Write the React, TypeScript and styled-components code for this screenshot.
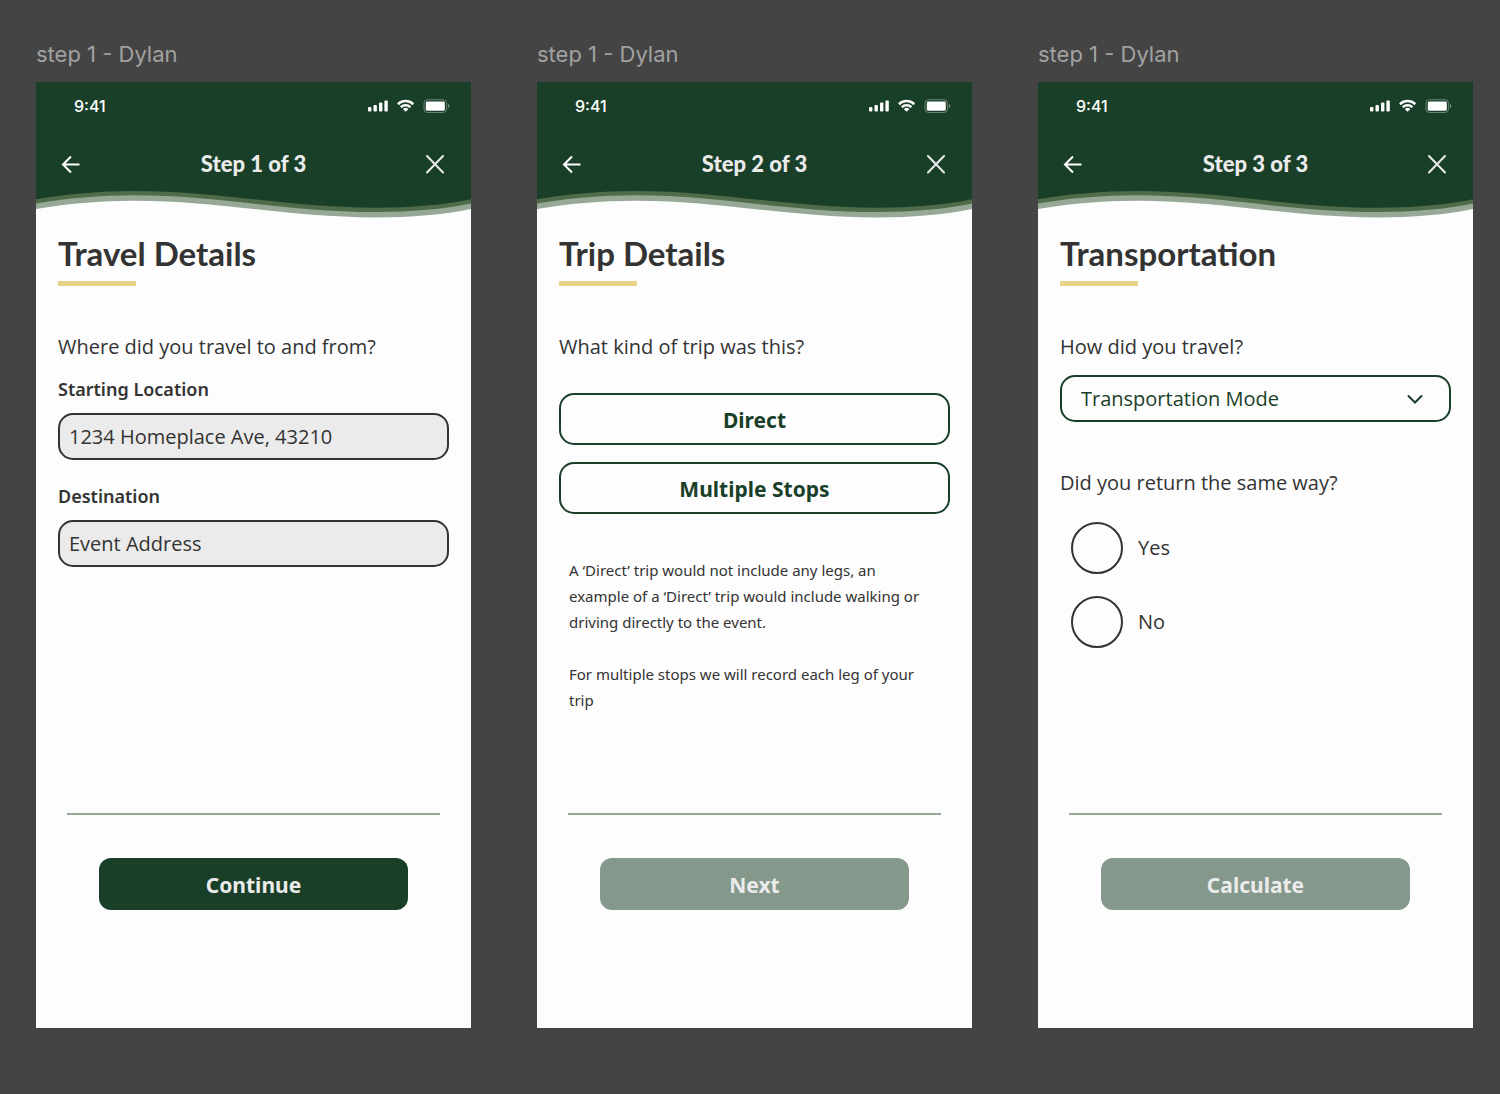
import React, { useState } from "react";
import styled, { createGlobalStyle, css } from "styled-components";

const color = {
  canvas: "#444444",
  caption: "#a1a1a1",
  forest: "#1a3f29",
  olive: "#4f6b4a",
  sage: "#96a896",
  disabled: "#85988c",
  paper: "#fdfdfd",
  field: "#ebebeb",
  ink: "#333333",
  gold: "#e8d488",
  light: "#ebebeb",
};

const noto = `"Noto Sans", "Open Sans", sans-serif`;
const openSans = `"Open Sans", "Noto Sans", sans-serif`;

const GlobalStyle = createGlobalStyle`
  *, *::before, *::after { box-sizing: border-box; }
  body { margin: 0; background: ${color.canvas}; font-family: ${noto}; color: ${color.ink}; }
  h1, h2, p, fieldset, legend { margin: 0; padding: 0; border: 0; }
  button, input, select { font-family: inherit; margin: 0; }
`;

const Canvas = styled.div`
  display: grid;
  grid-template-columns: repeat(3, minmax(0, 1fr));
  gap: 66px;
  min-height: 100vh;
  padding: 40px 27px 66px 36px;
`;

const Frame = styled.section`
  display: flex;
  flex-direction: column;
  gap: 14px;
`;

const Caption = styled.p`
  font: 400 22px/28px Inter, sans-serif;
  color: ${color.caption};
`;

const Screen = styled.div`
  flex: 1;
  display: flex;
  flex-direction: column;
  background: ${color.paper};
`;

const HeaderBar = styled.div`
  background: ${color.forest};
  padding: 12px 21px 8px;
  display: flex;
  flex-direction: column;
  gap: 28px;
`;

const StatusRow = styled.div`
  display: flex;
  align-items: center;
  justify-content: space-between;
  height: 24px;
  padding-left: 17px;
  color: #fff;
  font: 500 16px/24px Inter, sans-serif;
`;

const NavRow = styled.div`
  display: grid;
  grid-template-columns: 28px 1fr 28px;
  align-items: center;
  height: 36px;
`;

const NavTitle = styled.h2`
  font: 900 22px/28px Lato, sans-serif;
  text-align: center;
  color: ${color.light};
`;

const IconButton = styled.button`
  display: flex;
  align-items: center;
  justify-content: center;
  height: 36px;
  padding: 0;
  border: 0;
  background: none;
  cursor: pointer;
`;

const WaveSvg = styled.svg`
  display: block;
  width: 100%;
  height: 28px;
`;

const Content = styled.main`
  flex: 1;
  padding: 16px 22px 0;
`;

const Title = styled.h1`
  font: 700 33px/38px Lato, sans-serif;
  &::after {
    content: "";
    display: block;
    width: 78px;
    height: 5px;
    margin-top: 9px;
    background: ${color.gold};
  }
`;

const questionText = css`
  font-family: ${openSans};
  font-size: 20px;
  line-height: 28px;
  font-weight: 500;
`;

const Question = styled.p`
  ${questionText}
  margin-top: 47px;
`;

const QuestionLabel = styled.label`
  ${questionText}
  display: block;
  margin-top: 47px;
`;

const FieldList = styled.div`
  display: grid;
  gap: 24px;
  margin-top: 16px;
`;

const Field = styled.div`
  display: grid;
  gap: 12px;
`;

const FieldLabel = styled.label`
  font-size: 18px;
  line-height: 24px;
  font-weight: 600;
`;

const TextInput = styled.input`
  width: 100%;
  height: 47px;
  padding: 0 9px;
  border: 2px solid ${color.ink};
  border-radius: 15px;
  background: ${color.field};
  color: ${color.ink};
  font-family: ${openSans};
  font-size: 20px;
  &::placeholder { color: ${color.ink}; opacity: 1; }
`;

const ChoiceList = styled.div`
  display: grid;
  gap: 17px;
  margin-top: 32px;
`;

const ChoiceButton = styled.button`
  height: 52px;
  padding: 2px 0 0;
  border: 2px solid ${color.forest};
  border-radius: 15px;
  background: ${color.paper};
  color: ${color.forest};
  font-size: 21px;
  font-weight: 700;
  cursor: pointer;
`;

const Help = styled.div`
  display: grid;
  gap: 26px;
  margin-top: 43px;
  padding: 0 16px 0 10px;
  font-size: 15px;
  line-height: 26px;
`;

const SelectBox = styled.div`
  position: relative;
  margin-top: 14px;
  svg {
    position: absolute;
    right: 27px;
    top: 16px;
    pointer-events: none;
  }
`;

const Select = styled.select`
  appearance: none;
  display: block;
  width: 100%;
  height: 47px;
  padding: 0 60px 0 19px;
  border: 2px solid ${color.forest};
  border-radius: 15px;
  background: ${color.paper};
  color: ${color.forest};
  font-family: ${openSans};
  font-size: 20px;
`;

const RadioGroup = styled.fieldset`
  margin-top: 47px;
  legend { ${questionText} }
`;

const RadioList = styled.div`
  display: grid;
  gap: 22px;
  margin-top: 25px;
  padding-left: 11px;
`;

const RadioLabel = styled.label`
  ${questionText}
  display: flex;
  align-items: center;
  gap: 15px;
`;

const Radio = styled.input`
  appearance: none;
  width: 52px;
  height: 52px;
  margin: 0;
  border: 2px solid ${color.ink};
  border-radius: 50%;
  &:checked { box-shadow: inset 0 0 0 10px ${color.paper}; background: ${color.forest}; }
`;

const Footer = styled.footer`
  padding: 0 31px 118px;
`;

const Rule = styled.hr`
  height: 2px;
  margin: 0;
  border: 0;
  background: ${color.sage};
`;

const ActionButton = styled.button`
  display: block;
  width: calc(100% - 64px);
  height: 52px;
  margin: 43px auto 0;
  padding: 2px 0 0;
  border: 0;
  border-radius: 12px;
  background: ${color.forest};
  color: ${color.light};
  font-size: 21px;
  font-weight: 700;
  &:disabled { background: ${color.disabled}; }
`;

function StatusIcons() {
  return (
    <svg width="82" height="16" viewBox="0 0 82 16" fill="#fff" aria-hidden="true">
      <rect x="0" y="9" width="3.4" height="4.4" rx="1" />
      <rect x="5.5" y="7" width="3.4" height="6.4" rx="1" />
      <rect x="11" y="4.6" width="3.4" height="8.8" rx="1" />
      <rect x="16.4" y="2.4" width="3.4" height="11" rx="1" />
      <g transform="translate(29.2 1.8)">
        <path d="M8.4 2.5c2.4 0 4.7.9 6.5 2.6.1.1.3.1.5 0l1.3-1.3c.1-.2.1-.4 0-.5C12.1-1.1 4.7-1.1.1 3.3c-.1.1-.1.3 0 .5l1.3 1.3c.1.1.3.1.5 0C3.7 3.4 6 2.5 8.4 2.5z" />
        <path d="M8.4 6.7c1.3 0 2.6.5 3.6 1.4.1.1.3.1.5 0l1.3-1.3c.1-.2.1-.4 0-.5a7.9 7.9 0 0 0-10.8 0c-.1.1-.1.3 0 .5l1.3 1.3c.2.1.4.1.5 0 1-.9 2.3-1.4 3.6-1.4z" />
        <path d="M11 9.5c.1-.1.1-.3 0-.4a4 4 0 0 0-5.200 0c-.1.1-.1.3 0 .4l2.300 2.300c.2.2.4.2.6 0z" />
      </g>
      <rect x="56" y="1.7" width="22.6" height="12.8" rx="3.6" fill="none" stroke="#fff" strokeOpacity=".35" />
      <path d="M80 6v4.2c.9-.4 1.4-1.2 1.4-2.1S80.9 6.4 80 6z" fillOpacity=".4" />
      <rect x="57.8" y="3.5" width="19" height="9.2" rx="1.4" />
    </svg>
  );
}

// One crest and one trough; each band is the same curve moved down.
function waveEdge(dy: number) {
  const y = (v: number) => (v + dy).toFixed(1);
  return `M0 0V${y(9.3)}C30 ${y(4)} 65 ${y(1)} 98 ${y(1)}C185 ${y(1)} 250 ${y(17.7)} 340 ${y(17.7)}C375 ${y(17.7)} 408 ${y(15)} 435 ${y(9.3)}V0Z`;
}

function Wave() {
  return (
    <WaveSvg viewBox="0 0 435 28" preserveAspectRatio="none" aria-hidden="true">
      <path d={waveEdge(9.7)} fill={color.sage} />
      <path d={waveEdge(4.3)} fill={color.olive} />
      <path d={waveEdge(0)} fill={color.forest} />
    </WaveSvg>
  );
}

type StepProps = {
  step: number;
  title: string;
  action: string;
  ready?: boolean;
  children: React.ReactNode;
};

function Step({ step, title, action, ready = false, children }: StepProps) {
  return (
    <Frame>
      <Caption>step 1 - Dylan</Caption>
      <Screen>
        <header>
          <HeaderBar>
            <StatusRow>
              <span>9:41</span>
              <StatusIcons />
            </StatusRow>
            <NavRow>
              <IconButton type="button" aria-label="Back">
                <svg width="20" height="20" viewBox="0 0 20 20" fill="none" stroke="#fff" strokeWidth="2">
                  <path d="M18.5 10.5H2M10 2.500l-8 8 8 8" />
                </svg>
              </IconButton>
              <NavTitle>Step {step} of 3</NavTitle>
              <IconButton type="button" aria-label="Close">
                <svg width="20" height="20" viewBox="0 0 20 20" fill="none" stroke={color.light} strokeWidth="2" strokeLinecap="round">
                  <path d="M1 2l16 16.500M17 2L1 18.500" />
                </svg>
              </IconButton>
            </NavRow>
          </HeaderBar>
          <Wave />
        </header>
        <Content>
          <Title>{title}</Title>
          {children}
        </Content>
        <Footer>
          <Rule />
          <ActionButton type="button" disabled={!ready}>{action}</ActionButton>
        </Footer>
      </Screen>
    </Frame>
  );
}

export default function App() {
  const [start, setStart] = useState("1234 Homeplace Ave, 43210");
  return (
    <>
      <GlobalStyle />
      <Canvas>
        <Step step={1} title="Travel Details" action="Continue" ready>
          <Question>Where did you travel to and from?</Question>
          <FieldList>
            <Field>
              <FieldLabel htmlFor="start">Starting Location</FieldLabel>
              <TextInput id="start" value={start} onChange={(e) => setStart(e.target.value)} />
            </Field>
            <Field>
              <FieldLabel htmlFor="destination">Destination</FieldLabel>
              <TextInput id="destination" placeholder="Event Address" />
            </Field>
          </FieldList>
        </Step>

        <Step step={2} title="Trip Details" action="Next">
          <Question>What kind of trip was this?</Question>
          <ChoiceList>
            <ChoiceButton type="button">Direct</ChoiceButton>
            <ChoiceButton type="button">Multiple Stops</ChoiceButton>
          </ChoiceList>
          <Help>
            <p>
              A ‘Direct’ trip would not include any legs, an example of a ‘Direct’ trip would
              include walking or driving directly to the event.
            </p>
            <p>For multiple stops we will record each leg of your trip</p>
          </Help>
        </Step>

        <Step step={3} title="Transportation" action="Calculate">
          <QuestionLabel htmlFor="mode">How did you travel?</QuestionLabel>
          <SelectBox>
            <Select id="mode">
              <option>Transportation Mode</option>
            </Select>
            <svg width="18" height="16" viewBox="0 0 18 16" fill="none" stroke={color.forest} strokeWidth="2" aria-hidden="true">
              <path d="M2.500 5l6.500 6.500 6.500-6.500" strokeLinecap="round" />
            </svg>
          </SelectBox>
          <RadioGroup>
            <legend>Did you return the same way?</legend>
            <RadioList>
              <RadioLabel><Radio type="radio" name="same-way" value="yes" />Yes</RadioLabel>
              <RadioLabel><Radio type="radio" name="same-way" value="no" />No</RadioLabel>
            </RadioList>
          </RadioGroup>
        </Step>
      </Canvas>
    </>
  );
}
